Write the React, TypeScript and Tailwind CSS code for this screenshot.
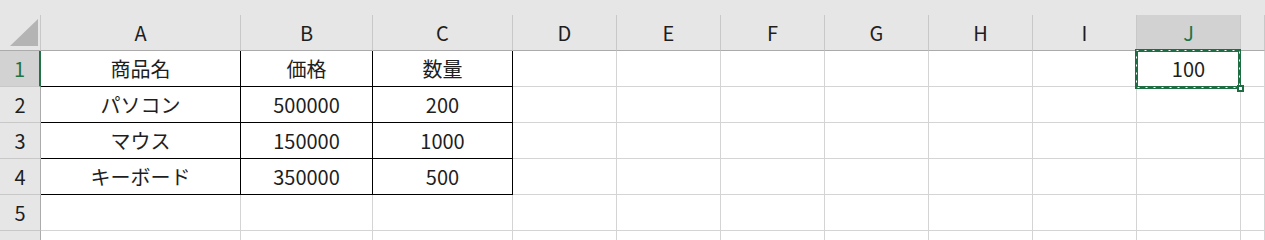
import React from "react";

const COLS = ["A", "B", "C", "D", "E", "F", "G", "H", "I", "J", "K"];

const DATA: Record<number, string[]> = {
  1: ["商品名", "価格", "数量"],
  2: ["パソコン", "500000", "200"],
  3: ["マウス", "150000", "1000"],
  4: ["キーボード", "350000", "500"],
};

const font = { fontFamily: '"Noto Sans CJK JP", "Liberation Sans", sans-serif' };

const Ants = () => (
  <div className="absolute z-10 -left-[2px] -top-[2px] w-[106px] h-[40px] pointer-events-none">
    <svg width="106" height="40" viewBox="0 0 106 40" className="block">
      <rect x="1.5" y="1.5" width="103" height="37" fill="none" stroke="#1f6e43" strokeWidth="3" />
      <rect x="1.5" y="1.5" width="103" height="37" fill="none" stroke="#ffffff" strokeWidth="1" strokeDasharray="2 6" />
    </svg>
    <div className="absolute right-[-3px] bottom-[-3px] w-[7px] h-[7px] bg-white border-2 border-[#1f6e43]" />
  </div>
);

const App = () => {
  const rows = [1, 2, 3, 4, 5, 6];
  return (
    <div className="w-[1265px] h-[240px] overflow-hidden bg-white text-[20px] text-[#1e1e1e]" style={font}>
      <div className="h-[15px] bg-[#e6e6e6]" />
      <div className="grid grid-cols-[41px_200px_132px_140px_104px_104px_104px_104px_104px_104px_104px_1fr] auto-rows-[36px]">
        {/* header row */}
        <div className="relative bg-[#e6e6e6] border-r border-b border-r-[#c8c8c8] border-b-[#ababab]">
          <svg width="41" height="36" className="absolute left-0 top-0">
            <polygon points="38,4 38,31 10,31" fill="#b4b4b4" />
          </svg>
        </div>
        {COLS.map((c) =>
          c === "J" ? (
            <div
              key={c}
              className="flex items-center justify-center bg-[#d2d2d2] text-[#217346] border-r border-b border-r-[#c8c8c8] border-b-[#ababab]"
            >
              {c}
            </div>
          ) : (
            <div
              key={c}
              className="flex items-center justify-center bg-[#e6e6e6] border-r border-b border-r-[#c8c8c8] border-b-[#ababab]"
            >
              {c === "K" ? "" : c}
            </div>
          )
        )}

        {rows.map((r) => (
          <React.Fragment key={r}>
            {r === 1 ? (
              <div className="flex items-center justify-center bg-[#d2d2d2] text-[#217346] border-r-2 border-b border-r-[#217346] border-b-[#c8c8c8]">
                {r}
              </div>
            ) : (
              <div className="flex items-center justify-center bg-[#e6e6e6] border-r border-b border-r-[#ababab] border-b-[#c8c8c8]">
                {r <= 5 ? r : ""}
              </div>
            )}
            {COLS.map((c, i) => {
              const inTable = r <= 4 && i < 3;
              const text = inTable ? DATA[r][i] : r === 1 && c === "J" ? "100" : "";
              return (
                <div
                  key={c}
                  className={
                    inTable
                      ? "flex items-center justify-center border-r border-b border-black"
                      : "relative flex items-center justify-center border-r border-b border-[#d4d4d4]"
                  }
                >
                  {text}
                  {r === 1 && c === "J" && <Ants />}
                </div>
              );
            })}
          </React.Fragment>
        ))}
      </div>
    </div>
  );
};

export default App;
